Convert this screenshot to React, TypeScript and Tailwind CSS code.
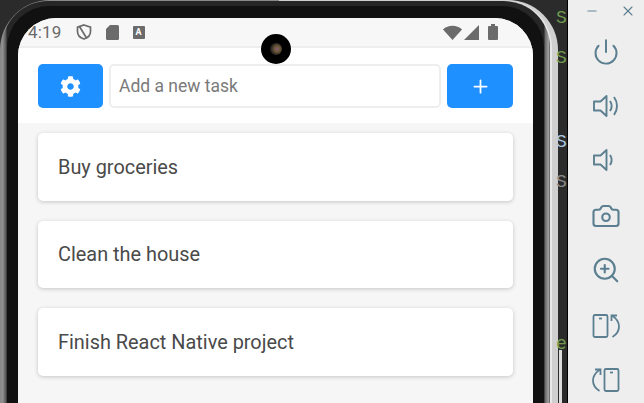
import { Camera, Minus, Plus, Power, X, ZoomIn } from "lucide-react";
import { FaCog } from "react-icons/fa";

const tasks = ["Buy groceries", "Clean the house", "Finish React Native project"];

function RotateLeft() {
  return (
    <svg width="28" height="26" viewBox="0 0 28 26" fill="none" stroke="#5b7f90" strokeWidth="1.8">
      <rect x="12.500" y="2" width="14" height="22" rx="1.500" />
      <path d="M18 5.500h3" />
      <path d="M8 2.500C3.500 5.500 1 9 1 13.500c0 4.500 2.500 8 6.500 10.500" />
      <path d="M3 2.500h5.500V8" />
    </svg>
  );
}

function RotateRight() {
  return (
    <svg width="28" height="26" viewBox="0 0 28 26" fill="none" stroke="#5b7f90" strokeWidth="1.8">
      <rect x="1.500" y="2" width="14" height="22" rx="1.500" />
      <path d="M7 5.500h3" />
      <path d="M20 2.500c4.500 3 7 6.500 7 11 0 4.500-2.500 8-6.500 10.500" />
      <path d="M25 2.500h-5.500V8" />
    </svg>
  );
}

function Speaker({ loud }: { loud?: boolean }) {
  return (
    <svg width="26" height="24" viewBox="0 0 26 24" fill="none" stroke="#5b7f90" strokeWidth="1.900" strokeLinejoin="round">
      <path d="M1 7.500h6.500L13.500 2v20l-6-5.500H1Z" />
      <path d="M17 7c2 3 2 7 0 10" />
      {loud && <path d="M21 3c4 5.500 4 12.500 0 18" />}
    </svg>
  );
}

function StatusBar() {
  return (
    <div className="flex h-[30px] shrink-0 items-center justify-between border-b-2 border-[#eeeeee] bg-[#f7f7f7] pl-[10px] pr-[35px] text-[#6b6b6b]">
      <div className="flex items-center gap-[14px]">
        <span className="text-[17px] leading-none tracking-[0.2px]">4:19</span>
        <svg width="16" height="16" viewBox="0 0 15 16" fill="none" stroke="#6b6b6b" strokeWidth="1.700">
          <path d="M7.500 1 14 3.200v4.300c0 3.500-2.600 6.300-6.500 7.500C3.600 13.800 1 11 1 7.500V3.200Z" />
          <path d="M3 2.500 10 14" />
        </svg>
        <svg width="13" height="15" viewBox="0 0 13 15" fill="#6b6b6b">
          <path d="M4 0h7.500A1.500 1.500 0 0 1 13 1.500v12a1.500 1.500 0 0 1-1.500 1.500h-10A1.500 1.500 0 0 1 0 13.500V4Z" />
        </svg>
        <span className="flex h-[13px] w-[12px] items-center justify-center rounded-[1px] bg-[#6b6b6b] text-[9px] font-bold leading-none text-white">A</span>
      </div>
      <div className="flex items-center gap-[2px]">
        <svg width="19" height="15" viewBox="0 0 19 15" fill="#6b6b6b">
          <path d="M0 4.500C5-.5 14-.5 19 4.500L9.500 15Z" />
        </svg>
        <svg width="15" height="15" viewBox="0 0 15 15" fill="#6b6b6b">
          <path d="M15 0v15H0Z" />
        </svg>
        <svg width="10" height="16" viewBox="0 0 10 16" fill="#6b6b6b" className="ml-[7px]">
          <path d="M3 0h4v2h2a1 1 0 0 1 1 1v12a1 1 0 0 1-1 1H1a1 1 0 0 1-1-1V3a1 1 0 0 1 1-1h2Z" />
        </svg>
      </div>
    </div>
  );
}

function Phone() {
  return (
    <div className="mr-[9px] h-[430px] rounded-t-[50px] bg-gradient-to-r from-[#8a8a8a] from-50% to-[#cfcfcf] to-50%">
      <div className="ml-[2px] mr-[6px] h-full rounded-t-[48px] border-r-2 border-[#e8e8e8] pt-[1px]">
        <div className="h-full rounded-t-[46px] bg-[linear-gradient(to_right,#9a9a9a_0,#555555_4px,#262626_5px,#262626_calc(100%-6px),#666666_calc(100%-5px),#a8a8a8_calc(100%-1px),#333333_100%)] pl-[5px] pr-[6px] pt-[5px]">
          <div className="h-full rounded-t-[42px] bg-[#111111] px-[11px] pt-[12px]">
            <div className="flex h-full flex-col overflow-hidden rounded-t-[38px] bg-[#f6f6f6] font-['Roboto',sans-serif]">
              <StatusBar />
              <div className="flex h-[75px] shrink-0 items-center gap-[6px] bg-white px-[20px] pt-[1px]">
                <button className="flex h-[44px] w-[65px] shrink-0 items-center justify-center rounded-[5px] bg-[#1e90ff] text-white">
                  <FaCog size={21} />
                </button>
                <div className="flex h-[44px] min-w-0 flex-1 items-center rounded-[5px] border-2 border-[#eeeeee] bg-white pl-[8px] pt-[1px] text-[17.500px] text-[#7a7a7a]">
                  Add a new task
                </div>
                <button className="flex h-[44px] w-[66px] shrink-0 items-center justify-center rounded-[5px] bg-[#1e90ff] text-white">
                  <Plus size={21} strokeWidth={2} />
                </button>
              </div>
              <div className="flex flex-col gap-[20px] px-[20px] pt-[10px]">
                {tasks.map((task) => (
                  <div
                    key={task}
                    className="flex h-[67.500px] items-center rounded-[5px] bg-white pl-[20px] pt-[2px] text-[19.900px] text-[#4a4a4a] shadow-[0_1px_4px_rgba(0,0,0,0.2)]"
                  >
                    {task}
                  </div>
                ))}
              </div>
            </div>
          </div>
        </div>
      </div>
    </div>
  );
}

export default function App() {
  return (
    <div className="flex h-[403px] w-[644px] overflow-hidden bg-black">
      <div className="relative h-full w-[567px] shrink-0 overflow-hidden bg-[#2b2b2b]">
        <Phone />
        {/* terminal letters showing behind the emulator frame */}
        <span className="absolute left-[556px] top-[7px] font-['Liberation_Mono',monospace] text-[18px] leading-[22px] text-[#6f9a4f]">S</span>
        <span className="absolute left-[556px] top-[47px] font-['Liberation_Mono',monospace] text-[18px] leading-[22px] text-[#6f9a4f]">S</span>
        <span className="absolute left-[556px] top-[131px] font-['Liberation_Mono',monospace] text-[18px] leading-[22px] text-[#a9c7e0]">S</span>
        <span className="absolute left-[556px] top-[171px] font-['Liberation_Mono',monospace] text-[18px] leading-[22px] text-[#8a8a8a]">S</span>
        <span className="absolute left-[556px] top-[333px] font-['Liberation_Mono',monospace] text-[18px] leading-[22px] text-[#6f9a4f]">e</span>
        {/* scrollbar of the window behind */}
        <div className="absolute bottom-0 left-[559px] top-[350px] w-[3px] bg-[#dddddd]" />
        {/* punch-hole camera */}
        <div className="absolute left-[261px] top-[34px] flex h-[30px] w-[30px] items-center justify-center rounded-full bg-black">
          <div className="h-[12px] w-[12px] rounded-full bg-[radial-gradient(circle_at_60%_50%,#8a5a78_0%,#6b5a3a_30%,#2a2420_65%,#111111_100%)]" />
        </div>
      </div>
      <div className="ml-[1px] flex h-full flex-1 flex-col items-center bg-[#eeeeee] text-[#5b7f90]">
        <div className="flex w-full items-center justify-between pl-[17px] pr-[8px] pt-[3px]">
          <Minus size={14} strokeWidth={1.600} />
          <X size={16} strokeWidth={1.600} />
        </div>
        <Power size={28} strokeWidth={1.700} className="mt-[19px]" />
        <div className="mt-[28px] h-[24px]"><Speaker loud /></div>
        <div className="mt-[30px] h-[24px]"><Speaker /></div>
        <Camera size={30} strokeWidth={1.700} className="mt-[29px]" />
        <ZoomIn size={30} strokeWidth={1.700} className="mt-[24px]" />
        <div className="mt-[28px] h-[26px]"><RotateRight /></div>
        <div className="mt-[28px] h-[26px]"><RotateLeft /></div>
      </div>
    </div>
  );
}
